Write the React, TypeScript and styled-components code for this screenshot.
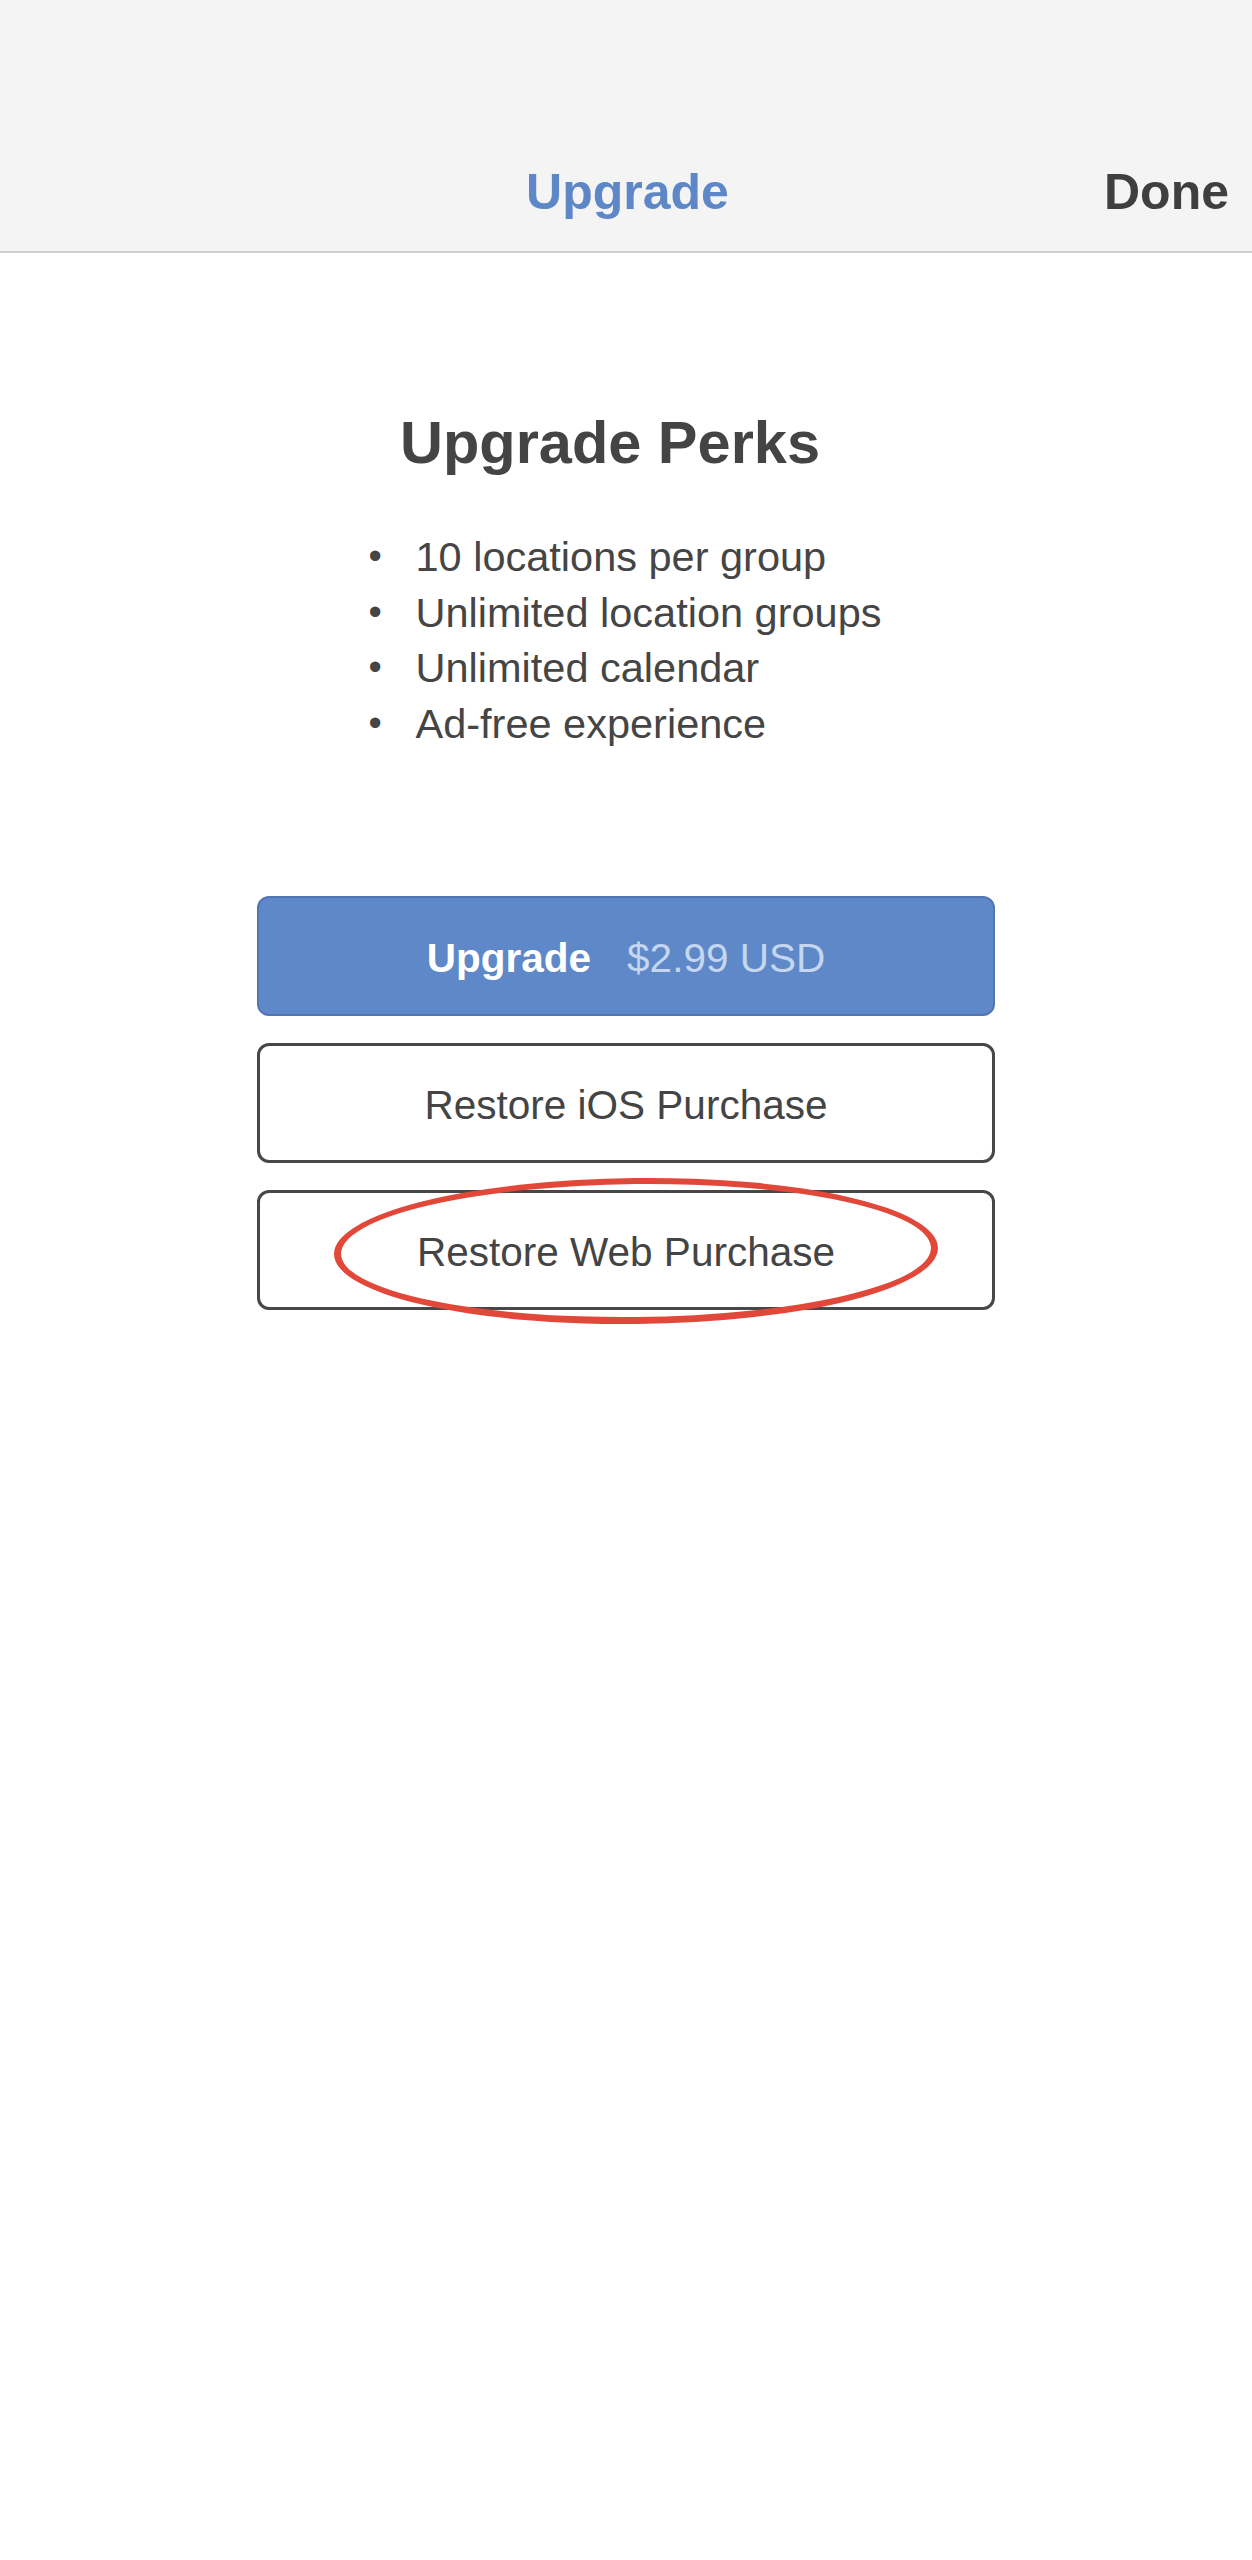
import React from 'react';
import styled, { createGlobalStyle } from 'styled-components';

const GlobalStyle = createGlobalStyle`
  html, body {
    margin: 0;
    padding: 0;
    background: #fff;
  }
  body {
    font-family: 'Liberation Sans', Arial, Helvetica, sans-serif;
    color: #444;
    -webkit-font-smoothing: antialiased;
  }
`;

// 상단 바
const NavBar = styled.header`
  height: 251px;
  box-sizing: content-box;
  background: #f4f4f4;
  border-bottom: 2px solid #cfcfcf;
  padding: 0 23px 0 26px;
  display: grid;
  grid-template-columns: 1fr auto 1fr;
  align-items: start;
`;

const NavSlot = styled.div<{ $align: 'left' | 'center' | 'right' }>`
  margin-top: 162px;
  line-height: 60px;
  font-size: 50px;
  font-weight: 700;
  text-align: ${(p) => p.$align};
`;

const NavTitle = styled(NavSlot)`
  color: #5d87c6;
`;

const NavAction = styled(NavSlot)`
  color: #3f3f3f;
  cursor: pointer;
`;

// 본문
const Content = styled.main`
  width: 738px;
  margin: 0 auto;
  padding-top: 155px;
  padding-bottom: 200px;
  display: flex;
  flex-direction: column;
  align-items: center;
`;

const Title = styled.h1`
  margin: 0;
  padding-right: 32px;
  font-size: 59.5px;
  line-height: 70px;
  font-weight: 700;
  color: #444;
`;

const PerkList = styled.ul`
  list-style: none;
  margin: 51px 0 0;
  padding: 0;
  width: 515px;
`;

const Perk = styled.li`
  display: flex;
  font-size: 41.5px;
  line-height: 55.7px;
  color: #454545;
  &::before {
    content: '•';
    width: 47px;
    flex: none;
    font-size: 38px;
    color: #454545;
  }
`;

const Buttons = styled.div`
  margin-top: 144px;
  width: 100%;
  display: flex;
  flex-direction: column;
  gap: 27px;
`;

const ButtonWrap = styled.div`
  position: relative;
  overflow: visible;
`;

const Button = styled.button<{ $primary?: boolean }>`
  height: 120px;
  width: 100%;
  box-sizing: border-box;
  padding: 5px 0 0;
  display: flex;
  align-items: center;
  justify-content: center;
  gap: 36px;
  border-radius: 12px;
  font-family: inherit;
  font-size: 40.5px;
  cursor: pointer;
  background: ${(p) => (p.$primary ? '#5e88c7' : '#fff')};
  border: ${(p) => (p.$primary ? '2px solid #5276b2' : '3px solid #474747')};
  color: ${(p) => (p.$primary ? '#fff' : '#444')};
`;

const ButtonLabel = styled.span`
  font-weight: 700;
`;

const Price = styled.span`
  color: #c5d6f0;
`;

// 빨간 동그라미 표시
const Circle = styled.div`
  position: absolute;
  z-index: 2;
  left: 77px;
  top: -12px;
  width: 604px;
  height: 146px;
  box-sizing: border-box;
  border: 7px solid #e2483a;
  border-top-width: 6px;
  border-radius: 50%;
  transform: rotate(-0.6deg);
  pointer-events: none;
`;

const perks = ['10 locations per group', 'Unlimited location groups', 'Unlimited calendar', 'Ad-free experience'];

const App = () => {
  return (
    <>
      <GlobalStyle />
      <NavBar>
        <NavSlot $align="left" />
        <NavTitle $align="center">Upgrade</NavTitle>
        <NavAction $align="right">Done</NavAction>
      </NavBar>
      <Content>
        <Title>Upgrade Perks</Title>
        <PerkList>
          {perks.map((p) => (
            <Perk key={p}>{p}</Perk>
          ))}
        </PerkList>
        <Buttons>
          <Button $primary>
            <ButtonLabel>Upgrade</ButtonLabel>
            <Price>$2.99 USD</Price>
          </Button>
          <Button>Restore iOS Purchase</Button>
          <ButtonWrap>
            <Button>Restore Web Purchase</Button>
            <Circle />
          </ButtonWrap>
        </Buttons>
      </Content>
    </>
  );
};

export default App;
